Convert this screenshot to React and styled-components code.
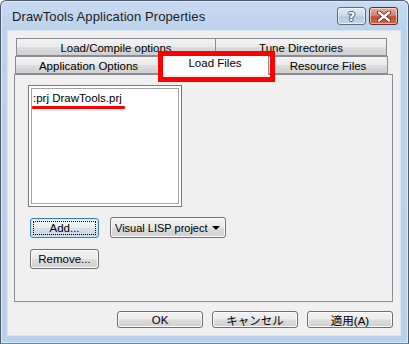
import React from 'react'
import styled, { createGlobalStyle } from 'styled-components'

const GlobalStyle = createGlobalStyle`
  html, body {
    margin: 0;
    padding: 0;
    background: #ffffff;
  }
  * {
    box-sizing: border-box;
  }
`

const uiFont = `"Liberation Sans", "Noto Sans CJK JP", Arial, sans-serif`

const Window = styled.div`
  width: 409px;
  height: 344px;
  display: flex;
  flex-direction: column;
  border: 1px solid #4e5c6e;
  border-bottom-color: #2fa3b8;
  border-radius: 6px 6px 0 0;
  background: linear-gradient(180deg, #c7dbf1 0px, #bad2eb 30px, #b9d1ea 100%);
  box-shadow: inset 0 0 0 1px #dbe8f6;
  font-family: ${uiFont};
  font-size: 11.5px;
  color: #000;
`

const TitleBar = styled.div`
  height: 29px;
  display: flex;
  align-items: center;
  justify-content: space-between;
  padding: 0 10px 0 11px;
`

const Title = styled.div`
  font-family: "Liberation Sans", Arial, sans-serif;
  font-size: 13px;
  color: #1b1b1b;
  letter-spacing: 0.1px;
  padding-top: 1px;
`

const CaptionButtons = styled.div`
  display: flex;
  gap: 3px;
  margin-top: 1px;
`

const CaptionButton = styled.div`
  width: 29px;
  height: 18px;
  border: 1px solid ${p => (p.$close ? '#6b2a22' : '#5b6e86')};
  border-radius: 3px;
  display: flex;
  align-items: center;
  justify-content: center;
  background: ${p =>
    p.$close
      ? 'linear-gradient(180deg, #e9a797 0%, #d98470 45%, #c24d36 55%, #d0684e 100%)'
      : 'linear-gradient(180deg, #e3edf8 0%, #cddcee 45%, #b4c9e2 55%, #c4d6ea 100%)'};
  box-shadow: inset 0 0 0 1px rgba(255, 255, 255, 0.55);
`

const HelpGlyph = styled.span`
  font-family: "DejaVu Sans", sans-serif;
  font-weight: bold;
  font-size: 13px;
  line-height: 1;
  color: #ffffff;
  text-shadow: 0 0 1px #3d4f66, 1px 0 0 #4d5f76, -1px 0 0 #4d5f76, 0 1px 0 #4d5f76, 0 -1px 0 #4d5f76;
`

const Client = styled.div`
  flex: 1;
  margin: 0 7px 7px 6px;
  background: #f0f0f0;
  border: 1px solid #d9e4f1;
  padding: 7px 7px 0 6px;
  display: flex;
  flex-direction: column;
`

const TabArea = styled.div`
  position: relative;
  display: flex;
  flex-direction: column;
`

const TabRow = styled.div`
  display: flex;
  height: 18px;
  margin-left: ${p => p.$inset}px;
  width: ${p => p.$width}px;
  align-items: flex-end;
`

const Tab = styled.div`
  width: ${p => p.$w}px;
  height: ${p => (p.$active ? '23px' : '18px')};
  margin: ${p => (p.$active ? '0 0 -1px 0' : '0')};
  position: relative;
  z-index: ${p => (p.$active ? 2 : 1)};
  display: flex;
  align-items: center;
  justify-content: center;
  border: 1px solid #898c95;
  border-bottom: ${p => (p.$active ? 'none' : '1px solid #898c95')};
  margin-left: ${p => (p.$first ? 0 : -1)}px;
  background: ${p =>
    p.$active
      ? '#ffffff'
      : 'linear-gradient(180deg, #f3f3f3 0%, #ebebeb 48%, #dddddd 52%, #cfcfcf 100%)'};
  padding-top: ${p => (p.$active ? '0' : '1px')};
  padding-bottom: ${p => (p.$active ? '3px' : '0')};
  white-space: nowrap;
`

const Panel = styled.div`
  height: 228px;
  border: 1px solid #898c95;
  background: #f0f0f0;
  padding: 10px 0 0 13px;
  display: flex;
  flex-direction: column;
`

const Highlight = styled.div`
  position: absolute;
  left: 144px;
  top: 13px;
  width: 117px;
  height: 31px;
  border: 5px solid #ff0000;
  z-index: 3;
  pointer-events: none;
`

const ListBox = styled.div`
  width: 154px;
  height: 122px;
  border: 1px solid #7a7a7a;
  padding: 2px;
  background: #ffffff;
`

const ListInner = styled.div`
  height: 100%;
  border: 1px solid #a3a3a3;
  background: #ffffff;
  padding: 2px 0 0 1px;
`

const ListItem = styled.span`
  position: relative;
  display: inline-block;
  white-space: nowrap;
  line-height: 14px;
  &::after {
    content: '';
    position: absolute;
    left: -1px;
    width: 93px;
    top: 15px;
    height: 3px;
    background: #ff0000;
    border-radius: 1px;
  }
`

const ControlRow = styled.div`
  display: flex;
  align-items: center;
  gap: 11px;
  margin-top: ${p => p.$top}px;
  margin-left: 2px;
`

const Button = styled.div`
  position: relative;
  width: ${p => p.$w}px;
  height: ${p => p.$h}px;
  display: flex;
  align-items: center;
  justify-content: center;
  border: 1px solid ${p => (p.$focused ? '#3c7fb1' : '#707070')};
  border-radius: 3px;
  background: ${p =>
    p.$focused
      ? 'linear-gradient(180deg, #f4f7fa 0%, #e9eef3 48%, #d8e1ea 52%, #ccd6e0 100%)'
      : 'linear-gradient(180deg, #f2f2f2 0%, #ebebeb 48%, #dddddd 52%, #cfcfcf 100%)'};
  box-shadow: inset 0 0 0 1px ${p => (p.$focused ? '#c8e4f6' : '#fbfbfb')};
  white-space: nowrap;
  &::before {
    content: '';
    display: ${p => (p.$focused ? 'block' : 'none')};
    position: absolute;
    inset: 2px;
    border: 1px dotted #000;
  }
`

const Select = styled.div`
  width: 116px;
  height: 21px;
  display: flex;
  align-items: center;
  justify-content: space-between;
  padding: 0 5px 0 4px;
  border: 1px solid #707070;
  border-radius: 3px;
  background: linear-gradient(180deg, #f2f2f2 0%, #ebebeb 48%, #dddddd 52%, #cfcfcf 100%);
  box-shadow: inset 0 0 0 1px #fbfbfb;
  white-space: nowrap;
  font-size: 11px;
`

const Arrow = styled.span`
  width: 0;
  height: 0;
  border-left: 4px solid transparent;
  border-right: 4px solid transparent;
  border-top: 4px solid #000;
`

const Footer = styled.div`
  display: flex;
  justify-content: flex-end;
  gap: 9px;
  margin-top: 9px;
  padding-right: 0;
`

const tabs1 = [
  { label: 'Load/Compile options', w: 200 },
  { label: 'Tune Directories', w: 172 },
]

const tabs2 = [
  { label: 'Application Options', w: 147 },
  { label: 'Load Files', w: 108, active: true },
  { label: 'Resource Files', w: 120 },
]

export default function App() {
  return (
    <>
      <GlobalStyle />
      <Window>
        <TitleBar>
          <Title>DrawTools Application Properties</Title>
          <CaptionButtons>
            <CaptionButton>
              <HelpGlyph>?</HelpGlyph>
            </CaptionButton>
            <CaptionButton $close>
              <svg width="14" height="11" viewBox="0 0 14 11">
                <path d="M2 1.5 L12 9.5 M12 1.5 L2 9.5" stroke="#5a1a10" strokeWidth="4" strokeLinecap="round" />
                <path d="M2 1.5 L12 9.5 M12 1.5 L2 9.5" stroke="#ffffff" strokeWidth="2.4" strokeLinecap="round" />
              </svg>
            </CaptionButton>
          </CaptionButtons>
        </TitleBar>
        <Client>
          <TabArea>
            <TabRow $inset={2} $width={372}>
              {tabs1.map((t, i) => (
                <Tab key={t.label} $w={t.w} $first={i === 0}>{t.label}</Tab>
              ))}
            </TabRow>
            <TabRow $inset={1} $width={374}>
              {tabs2.map((t, i) => (
                <Tab key={t.label} $w={t.w} $first={i === 0} $active={t.active}>{t.label}</Tab>
              ))}
            </TabRow>
            <Highlight />
            <Panel>
              <ListBox>
                <ListInner>
                  <ListItem>:prj DrawTools.prj</ListItem>
                </ListInner>
              </ListBox>
              <ControlRow $top={10}>
                <Button $w={69} $h={20} $focused>Add...</Button>
                <Select>
                  <span>Visual LISP project</span>
                  <Arrow />
                </Select>
              </ControlRow>
              <ControlRow $top={11}>
                <Button $w={69} $h={20}>Remove...</Button>
              </ControlRow>
            </Panel>
          </TabArea>
          <Footer>
            <Button $w={86} $h={17}>OK</Button>
            <Button $w={86} $h={17}>キャンセル</Button>
            <Button $w={86} $h={17}>適用(A)</Button>
          </Footer>
        </Client>
      </Window>
    </>
  )
}
